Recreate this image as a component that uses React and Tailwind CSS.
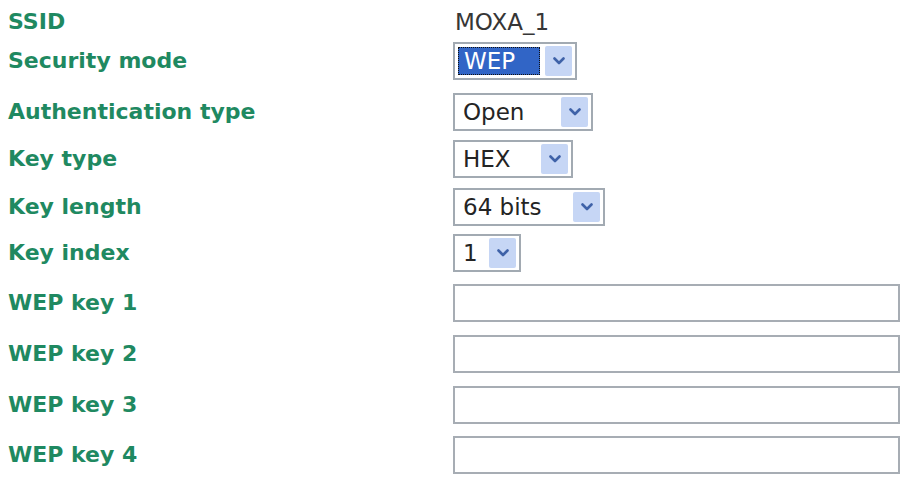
import React from "react";

const Chevron = () => (
  <svg width="12" height="8" viewBox="0 0 12 8" fill="none">
    <polyline points="1.5,1.5 6,6 10.5,1.5" stroke="#3f62a8" strokeWidth="2.6" strokeLinecap="round" strokeLinejoin="round" />
  </svg>
);

const Button = () => (
  <div className="my-[2px] mr-[3px] flex w-[27px] items-center justify-center rounded-[2px] bg-[#c6d6f5]">
    <Chevron />
  </div>
);

const Select = ({ width, children }) => (
  <div className={`flex h-[38px] items-stretch border-2 border-[#a2aab2] bg-white ${width}`}>
    <div className="flex flex-1 items-center pl-[8px] text-[23px] leading-none text-[#242424]">{children}</div>
    <Button />
  </div>
);

const Row = ({ label, mt, children }) => (
  <div className={`flex h-[38px] items-center ${mt}`}>
    <div className="w-[453px] pl-[8px] text-[22px] font-bold leading-none text-[#1f8961]">{label}</div>
    <div className="flex flex-1 items-center pr-[7px]">{children}</div>
  </div>
);

const Input = () => <div className="h-[38px] w-full border-2 border-[#a7adb4] bg-white" />;

export default function App() {
  return (
    <div className="h-[481px] w-[907px] overflow-hidden bg-white" style={{ fontFamily: '"DejaVu Sans", Verdana, sans-serif' }}>
      <Row label="SSID" mt="mt-[3px]">
        <span className="pl-[2px] text-[23px] leading-none text-[#363636]">MOXA_1</span>
      </Row>
      <Row label="Security mode" mt="mt-[1px]">
        <div className="flex h-[38px] w-[124px] items-stretch border-2 border-[#a2aab2] bg-white">
          <div className="flex flex-1 items-center py-[3px] pl-[3px] pr-[5px]">
            <div className="flex h-full w-full items-center border border-dotted border-[#111] bg-[#3165c6] pl-[5px] text-[23px] leading-none text-white">
              WEP
            </div>
          </div>
          <Button />
        </div>
      </Row>
      <Row label="Authentication type" mt="mt-[13px]">
        <Select width="w-[140px]">Open</Select>
      </Row>
      <Row label="Key type" mt="mt-[9px]">
        <Select width="w-[120px]">HEX</Select>
      </Row>
      <Row label="Key length" mt="mt-[10px]">
        <Select width="w-[152px]">64 bits</Select>
      </Row>
      <Row label="Key index" mt="mt-[8px]">
        <Select width="w-[68px]">1</Select>
      </Row>
      <Row label="WEP key 1" mt="mt-[12px]">
        <Input />
      </Row>
      <Row label="WEP key 2" mt="mt-[13px]">
        <Input />
      </Row>
      <Row label="WEP key 3" mt="mt-[13px]">
        <Input />
      </Row>
      <Row label="WEP key 4" mt="mt-[12px]">
        <Input />
      </Row>
    </div>
  );
}
